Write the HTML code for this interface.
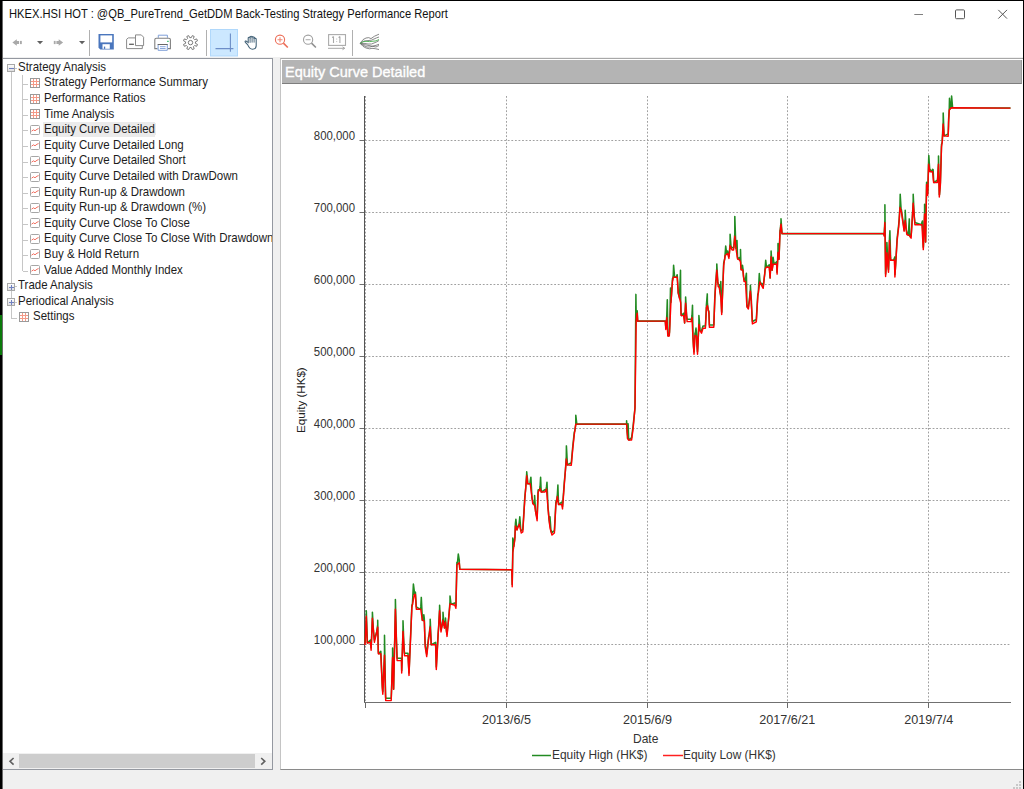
<!DOCTYPE html>
<html><head><meta charset="utf-8">
<style>
*{margin:0;padding:0;box-sizing:border-box}
html,body{width:1024px;height:789px;overflow:hidden;background:#f0f0f0;font-family:"Liberation Sans",sans-serif;}
.abs{position:absolute}
#win{position:absolute;left:0;top:0;width:1024px;height:789px;}
#frameL{position:absolute;left:0;top:0;width:2px;height:789px;background:#000}
#frameL2{position:absolute;left:2px;top:0;width:1px;height:789px;background:#6a6a6a}
#frameT{position:absolute;left:0;top:0;width:1024px;height:1px;background:#000}
#frameR{position:absolute;left:1023px;top:0;width:1px;height:789px;background:#000}
#topbar{position:absolute;left:3px;top:1px;width:1020px;height:56px;background:#fff}
#tbline{display:none}
.title{position:absolute;left:8.9px;top:9.0px;font-size:11.9px;line-height:11.9px;color:#111;white-space:nowrap;transform:scaleX(0.9387);transform-origin:0 0}
#tree{position:absolute;left:2px;top:58px;width:271px;height:712px;background:#fff;border:1px solid #9498a0;}
#treeclip{position:absolute;left:3px;top:59px;width:269px;height:694px;overflow:hidden}
#treeclip .t{margin-left:-3px;margin-top:-59px}
.t{position:absolute;font-size:12.1px;line-height:12.1px;color:#1c1c1c;white-space:nowrap;transform:scaleX(0.9488);transform-origin:0 0}
.sel{background:#ebebeb;padding:0 1px 0 0}
#selbg{position:absolute;left:43px;top:122px;width:112px;height:15px;background:#ebebeb}
#panel{position:absolute;left:280px;top:58px;width:743px;height:712px;background:#fff;border-left:1px solid #c4c4c4;border-top:1px solid #a8a8a8;border-bottom:1px solid #8a8a8a}
#hdr{position:absolute;left:282px;top:60px;width:740px;height:24px;background:#b4b4b4;border-bottom:1px solid #7e7e7e;border-right:1px solid #9a9a9a}
.hdrt{position:absolute;left:285.3px;top:64.1px;font-size:15.3px;line-height:15.3px;color:#fff;white-space:nowrap;-webkit-text-stroke:0.35px #fff;transform:scaleX(0.948);transform-origin:0 0}
.yl{position:absolute;left:294.6px;width:60px;text-align:right;font-size:12.1px;line-height:12.1px;color:#333;white-space:nowrap;transform:scaleX(0.942);transform-origin:100% 0}
.xl{position:absolute;top:713.6px;width:120px;text-align:center;font-size:12.6px;line-height:12.6px;color:#333;white-space:nowrap}
.dl{stroke:#c6c6c6;stroke-width:1}
.gd{stroke:#a0a0a0;stroke-width:1;stroke-dasharray:1.8 1.77}
#svg{position:absolute;left:0;top:0}
</style></head><body>
<div id="win">
<div id="topbar"></div>
<div class="title">HKEX.HSI HOT : @QB_PureTrend_GetDDM Back-Testing Strategy Performance Report</div>
<div id="tbline"></div>
<div id="tree"></div>
<div id="selbg"></div>
<div id="treeclip"><div class="t" style="left:17.9px;top:60.85px">Strategy Analysis</div><div class="t" style="left:44.0px;top:76.45px">Strategy Performance Summary</div><div class="t" style="left:44.0px;top:92.05px">Performance Ratios</div><div class="t" style="left:44.0px;top:107.65px">Time Analysis</div><div class="t sel" style="left:44.0px;top:123.25px">Equity Curve Detailed</div><div class="t" style="left:44.0px;top:138.85px">Equity Curve Detailed Long</div><div class="t" style="left:44.0px;top:154.45px">Equity Curve Detailed Short</div><div class="t" style="left:44.0px;top:170.05px">Equity Curve Detailed with DrawDown</div><div class="t" style="left:44.0px;top:185.65px">Equity Run-up &amp; Drawdown</div><div class="t" style="left:44.0px;top:201.25px">Equity Run-up &amp; Drawdown (%)</div><div class="t" style="left:44.0px;top:216.85px">Equity Curve Close To Close</div><div class="t" style="left:44.0px;top:232.45px">Equity Curve Close To Close With Drawdown</div><div class="t" style="left:44.0px;top:248.05px">Buy &amp; Hold Return</div><div class="t" style="left:44.0px;top:263.65px">Value Added Monthly Index</div><div class="t" style="left:17.9px;top:279.25px">Trade Analysis</div><div class="t" style="left:17.9px;top:294.85px">Periodical Analysis</div><div class="t" style="left:32.8px;top:310.45px">Settings</div></div>
<div id="panel"></div>
<div id="hdr"></div>
<div class="hdrt">Equity Curve Detailed</div>
<div class="yl" style="top:634.1px">100,000</div><div class="yl" style="top:562.1px">200,000</div><div class="yl" style="top:490.1px">300,000</div><div class="yl" style="top:418.1px">400,000</div><div class="yl" style="top:346.1px">500,000</div><div class="yl" style="top:274.1px">600,000</div><div class="yl" style="top:202.1px">700,000</div><div class="yl" style="top:130.1px">800,000</div>
<div class="xl" style="left:446.4px">2013/6/5</div><div class="xl" style="left:587.4px">2015/6/9</div><div class="xl" style="left:727.3px">2017/6/21</div><div class="xl" style="left:868.7px">2019/7/4</div>
<div class="abs" style="left:632.8px;top:732.5px;font-size:12.4px;line-height:12.4px;color:#333;transform:scaleX(0.97);transform-origin:0 0">Date</div>
<div class="abs" style="left:552.4px;top:749.3px;font-size:12.4px;line-height:12.4px;color:#333;white-space:nowrap;transform:scaleX(0.962);transform-origin:0 0">Equity High (HK$)</div>
<div class="abs" style="left:683.2px;top:749.3px;font-size:12.4px;line-height:12.4px;color:#333;white-space:nowrap;transform:scaleX(0.962);transform-origin:0 0">Equity Low (HK$)</div>
<div class="abs" style="left:295px;top:432.5px;transform-origin:0 0;transform:rotate(-90deg);font-size:11.6px;line-height:11.6px;color:#222;white-space:nowrap">Equity (HK$)</div>
<svg id="svg" width="1024" height="789">
<defs><linearGradient id="bg" x1="0" y1="0" x2="0" y2="1"><stop offset="0" stop-color="#ffffff"/><stop offset="1" stop-color="#dcdcdc"/></linearGradient></defs>

<g fill="#a9a9a9">
  <path d="M12.4 42.5 L16.8 39.3 L16.8 40.9 L19.1 40.9 L19.1 44.1 L16.8 44.1 L16.8 45.7 Z"/>
  <rect x="20" y="40.9" width="1.8" height="3.2"/>
  <path d="M63.1 42.5 L58.7 39.3 L58.7 40.9 L56.4 40.9 L56.4 44.1 L58.7 44.1 L58.7 45.7 Z"/>
  <rect x="53.8" y="40.9" width="1.8" height="3.2"/>
</g>
<path d="M37 41 L43.1 41 L40.05 44.2 Z" fill="#606060"/>
<path d="M79 41 L85.1 41 L82.05 44.2 Z" fill="#606060"/>
<rect x="89" y="30" width="1" height="26" fill="#b0b0b0"/>
<rect x="206" y="30" width="1" height="26" fill="#b0b0b0"/>
<rect x="352" y="30" width="1" height="26" fill="#b0b0b0"/>
<!-- save -->
<path d="M98.5 34 H113.8 V49.6 H100.3 L98.5 47.8 Z" fill="#4a76bd"/>
<rect x="100.4" y="35.4" width="11.8" height="7" fill="#fff"/>
<rect x="102.5" y="44.2" width="7.3" height="4.6" fill="#fff"/>
<rect x="103.9" y="46.6" width="1.3" height="2.3" fill="#4a76bd"/>
<!-- page setup -->
<g fill="none" stroke="#8a8a8a" stroke-width="1">
  <path d="M126.6 48.6 V39.3 L128.3 37.9 H135.3"/>
  <path d="M135.5 45.6 V34.9 H141.3 L143.6 37.2 V45.6 Z" fill="#fff"/>
  <path d="M126.6 48.6 H142.3 V45.8"/>
</g>
<rect x="129.1" y="43.7" width="4.8" height="1.1" fill="#444"/>
<!-- printer -->
<path d="M158.3 37.8 V35.2 H167.4 V37.8" fill="none" stroke="#7f9fd8" stroke-width="1"/>
<path d="M157.5 48.6 H154.8 V39.8 Q154.8 38.3 156.3 38.3 H168.9 Q170.4 38.3 170.4 39.8 V48.6 H167.7" fill="none" stroke="#808080" stroke-width="1.1"/>
<rect x="167" y="40.8" width="1.8" height="1.1" fill="#3cc070"/>
<rect x="157.6" y="44" width="10.2" height="1" fill="#666"/>
<path d="M158.1 45 V50.3 H167.3 V45" fill="#fff" stroke="#7f9fd8" stroke-width="1"/>
<path d="M160 46.7 H165.6 M160 48.5 H165.6" stroke="#7f9fd8" stroke-width="0.9"/>
<!-- gear -->
<path d="M192.29 35.63 L194.17 36.40 L193.44 38.55 L194.55 39.66 L196.70 38.93 L197.47 40.81 L195.44 41.82 L195.44 43.38 L197.47 44.39 L196.70 46.27 L194.55 45.54 L193.44 46.65 L194.17 48.80 L192.29 49.57 L191.28 47.54 L189.72 47.54 L188.71 49.57 L186.83 48.80 L187.56 46.65 L186.45 45.54 L184.30 46.27 L183.53 44.39 L185.56 43.38 L185.56 41.82 L183.53 40.81 L184.30 38.93 L186.45 39.66 L187.56 38.55 L186.83 36.40 L188.71 35.63 L189.72 37.66 L191.28 37.66Z" fill="none" stroke="#7a7a7a" stroke-width="1"/>
<circle cx="190.5" cy="42.6" r="2.2" fill="none" stroke="#7a7a7a" stroke-width="1"/>
<!-- selected crosshair button -->
<rect x="210.5" y="29.5" width="27" height="26.5" fill="#cce8ff" stroke="#b0d8fb" stroke-width="1"/>
<path d="M230.4 33.6 V51.8 M215.5 48.6 H233.4" stroke="#6d8ec8" stroke-width="1.1"/>
<!-- hand -->
<path d="M247.6 44.6 L245.4 42.4 Q244.6 41.2 245.8 40.9 L248.2 42.6 V37.9 Q249.1 36.7 250.1 37.6 V36.6 Q251.1 35.8 252.1 36.6 V37 Q253.1 36.3 254.1 37.2 V38.3 Q255.2 37.8 256.2 38.8 V45.5 Q256.2 49.2 252.4 49.2 Q249.6 49.2 247.6 44.6 Z" fill="#fff" stroke="#3f5f75" stroke-width="1.05"/>
<path d="M250.1 37.6 V42.8 M252.1 36.9 V42.6 M254.1 37.4 V42.6" stroke="#3f5f75" stroke-width="0.9"/>
<!-- zoom in -->
<circle cx="280" cy="39.7" r="4.6" fill="none" stroke="#ec6e58" stroke-width="1.1"/>
<path d="M283.4 43.1 L287.8 47.5" stroke="#ec6e58" stroke-width="1.6"/>
<path d="M277.5 39.7 H282.5 M280 37.2 V42.2" stroke="#f08a78" stroke-width="1.1"/>
<!-- zoom out -->
<circle cx="308.1" cy="39.7" r="4.6" fill="none" stroke="#a0a0a0" stroke-width="1.1"/>
<path d="M311.5 43.1 L315.9 47.5" stroke="#909090" stroke-width="1.6"/>
<path d="M305.6 39.7 H310.6" stroke="#b0b0b0" stroke-width="1.1"/>
<!-- 1:1 -->
<rect x="328.6" y="34.6" width="16.9" height="10.8" fill="none" stroke="#ababab" stroke-width="1.1"/>
<path d="M333.5 36.4 V43 M332.2 37.6 L333.5 36.4 M339.9 36.4 V43 M338.6 37.6 L339.9 36.4" fill="none" stroke="#a8a8a8" stroke-width="1.1"/>
<path d="M336.7 38.6 V39.5 M336.7 41.2 V42.1" stroke="#b4b4b4" stroke-width="1"/>
<path d="M328 48.3 H344.6 M342.5 46.9 L344.8 48.3 L342.5 49.7" fill="none" stroke="#a8a8a8" stroke-width="1"/>
<!-- chart tool icon -->
<g fill="none" stroke="#6a6a6a" stroke-width="0.8">
  <path d="M360.2 43.4 Q363 38.5 366 38 Q369 37 371 38.6 Q374 36 379 34.2"/>
  <path d="M360.2 43.4 Q364 40 368 40.6 Q372 40.5 374 39 Q376 38 379 37"/>
  <path d="M360.2 43.4 Q364 43 368 44 Q372 44.5 374 43 Q377 42 379 40.5"/>
  <path d="M360.2 43.4 Q364 46 367 47 Q370 47.5 373 46 Q376 45.5 379 44.3"/>
  <path d="M360.2 43.4 Q363 47 366 48 Q370 49.5 372 48.3 Q375 48.5 379 49.5"/>
  <path d="M360.2 43.4 Q365 45 369 45.5 Q373 46.5 376 47 Q378 46 379 45.5"/>
</g>
<path d="M360.2 43.4 Q363 41 366 41.3 Q370 42 373 41.2 Q376 41.4 379 39.5" fill="none" stroke="#4caf50" stroke-width="0.9"/>
<!-- window controls -->
<path d="M914.3 14.5 H923" stroke="#808080" stroke-width="1"/>
<rect x="955.5" y="9.9" width="9" height="8.8" rx="1" fill="none" stroke="#555" stroke-width="1"/>
<path d="M998.3 9.9 L1007 18.6 M1007 9.9 L998.3 18.6" stroke="#555" stroke-width="1"/>


<rect x="3" y="753" width="269" height="16" fill="#f0f0f0"/>
<rect x="19" y="754" width="236" height="14" fill="#cdcdcd"/>
<path d="M13.6 758 L10 761.3 L13.6 764.6" fill="none" stroke="#606060" stroke-width="1.6"/>
<path d="M261.2 758 L264.8 761.3 L261.2 764.6" fill="none" stroke="#606060" stroke-width="1.6"/>
<g fill="#c8c8c8"><rect x="1019" y="781" width="2" height="2"/><rect x="1016" y="784" width="2" height="2"/><rect x="1019" y="784" width="2" height="2"/><rect x="1013" y="787" width="2" height="2"/><rect x="1016" y="787" width="2" height="2"/><rect x="1019" y="787" width="2" height="2"/></g>

<line x1="11.5" y1="72" x2="11.5" y2="318" class="dl"/><line x1="22.5" y1="75" x2="22.5" y2="271" class="dl"/>
<line x1="15" y1="68.5" x2="17" y2="68.5" class="dl"/><rect x="7.5" y="64.5" width="7" height="7" fill="url(#bg)" stroke="#a8a8a8"/><rect x="9" y="68" width="5" height="1" fill="#7080c0"/><line x1="23" y1="84.5" x2="28" y2="84.5" class="dl"/><line x1="23" y1="99.5" x2="28" y2="99.5" class="dl"/><line x1="23" y1="115.5" x2="28" y2="115.5" class="dl"/><line x1="23" y1="130.5" x2="28" y2="130.5" class="dl"/><line x1="23" y1="146.5" x2="28" y2="146.5" class="dl"/><line x1="23" y1="162.5" x2="28" y2="162.5" class="dl"/><line x1="23" y1="177.5" x2="28" y2="177.5" class="dl"/><line x1="23" y1="193.5" x2="28" y2="193.5" class="dl"/><line x1="23" y1="208.5" x2="28" y2="208.5" class="dl"/><line x1="23" y1="224.5" x2="28" y2="224.5" class="dl"/><line x1="23" y1="240.5" x2="28" y2="240.5" class="dl"/><line x1="23" y1="255.5" x2="28" y2="255.5" class="dl"/><line x1="23" y1="271.5" x2="28" y2="271.5" class="dl"/><line x1="15" y1="286.5" x2="17" y2="286.5" class="dl"/><rect x="7.5" y="283.5" width="7" height="7" fill="url(#bg)" stroke="#a8a8a8"/><rect x="9" y="287" width="5" height="1" fill="#7080c0"/><rect x="11" y="285" width="1" height="5" fill="#7080c0"/><line x1="15" y1="302.5" x2="17" y2="302.5" class="dl"/><rect x="7.5" y="298.5" width="7" height="7" fill="url(#bg)" stroke="#a8a8a8"/><rect x="9" y="302" width="5" height="1" fill="#7080c0"/><rect x="11" y="300" width="1" height="5" fill="#7080c0"/><line x1="11" y1="318.5" x2="17" y2="318.5" class="dl"/>
<g transform="translate(30,78)"><rect x="0.5" y="0.5" width="9" height="9" fill="#fff" stroke="#9a9a9a"/><path d="M1 3.5H9M1 6.5H9M3.5 1V9M6.5 1V9" stroke="#f49a88" stroke-width="1"/></g><g transform="translate(30,94)"><rect x="0.5" y="0.5" width="9" height="9" fill="#fff" stroke="#9a9a9a"/><path d="M1 3.5H9M1 6.5H9M3.5 1V9M6.5 1V9" stroke="#f49a88" stroke-width="1"/></g><g transform="translate(30,109)"><rect x="0.5" y="0.5" width="9" height="9" fill="#fff" stroke="#9a9a9a"/><path d="M1 3.5H9M1 6.5H9M3.5 1V9M6.5 1V9" stroke="#f49a88" stroke-width="1"/></g><g transform="translate(30,125)"><rect x="0.5" y="0.5" width="9" height="9" rx="1" fill="#fff" stroke="#a6a6a6"/><path d="M1.5 6.2L3.5 4.8L5 5.8L7 4.2L8.6 3.6" fill="none" stroke="#f06050" stroke-width="0.9"/></g><g transform="translate(30,140)"><rect x="0.5" y="0.5" width="9" height="9" rx="1" fill="#fff" stroke="#a6a6a6"/><path d="M1.5 6.2L3.5 4.8L5 5.8L7 4.2L8.6 3.6" fill="none" stroke="#f06050" stroke-width="0.9"/></g><g transform="translate(30,156)"><rect x="0.5" y="0.5" width="9" height="9" rx="1" fill="#fff" stroke="#a6a6a6"/><path d="M1.5 6.2L3.5 4.8L5 5.8L7 4.2L8.6 3.6" fill="none" stroke="#f06050" stroke-width="0.9"/></g><g transform="translate(30,172)"><rect x="0.5" y="0.5" width="9" height="9" rx="1" fill="#fff" stroke="#a6a6a6"/><path d="M1.5 6.2L3.5 4.8L5 5.8L7 4.2L8.6 3.6" fill="none" stroke="#f06050" stroke-width="0.9"/></g><g transform="translate(30,187)"><rect x="0.5" y="0.5" width="9" height="9" rx="1" fill="#fff" stroke="#a6a6a6"/><path d="M1.5 6.2L3.5 4.8L5 5.8L7 4.2L8.6 3.6" fill="none" stroke="#f06050" stroke-width="0.9"/></g><g transform="translate(30,203)"><rect x="0.5" y="0.5" width="9" height="9" rx="1" fill="#fff" stroke="#a6a6a6"/><path d="M1.5 6.2L3.5 4.8L5 5.8L7 4.2L8.6 3.6" fill="none" stroke="#f06050" stroke-width="0.9"/></g><g transform="translate(30,218)"><rect x="0.5" y="0.5" width="9" height="9" rx="1" fill="#fff" stroke="#a6a6a6"/><path d="M1.5 6.2L3.5 4.8L5 5.8L7 4.2L8.6 3.6" fill="none" stroke="#f06050" stroke-width="0.9"/></g><g transform="translate(30,234)"><rect x="0.5" y="0.5" width="9" height="9" rx="1" fill="#fff" stroke="#a6a6a6"/><path d="M1.5 6.2L3.5 4.8L5 5.8L7 4.2L8.6 3.6" fill="none" stroke="#f06050" stroke-width="0.9"/></g><g transform="translate(30,249)"><rect x="0.5" y="0.5" width="9" height="9" rx="1" fill="#fff" stroke="#a6a6a6"/><path d="M1.5 6.2L3.5 4.8L5 5.8L7 4.2L8.6 3.6" fill="none" stroke="#f06050" stroke-width="0.9"/></g><g transform="translate(30,265)"><rect x="0.5" y="0.5" width="9" height="9" rx="1" fill="#fff" stroke="#a6a6a6"/><path d="M1.5 6.2L3.5 4.8L5 5.8L7 4.2L8.6 3.6" fill="none" stroke="#f06050" stroke-width="0.9"/></g><g transform="translate(19,312)"><rect x="0.5" y="0.5" width="9" height="9" fill="#fff" stroke="#9a9a9a"/><path d="M1 3.5H9M1 6.5H9M3.5 1V9M6.5 1V9" stroke="#f49a88" stroke-width="1"/></g>
<line x1="365" y1="644.5" x2="1010" y2="644.5" class="gd"/><line x1="359.5" y1="644.5" x2="364" y2="644.5" stroke="#707070"/><line x1="365" y1="572.5" x2="1010" y2="572.5" class="gd"/><line x1="359.5" y1="572.5" x2="364" y2="572.5" stroke="#707070"/><line x1="365" y1="500.5" x2="1010" y2="500.5" class="gd"/><line x1="359.5" y1="500.5" x2="364" y2="500.5" stroke="#707070"/><line x1="365" y1="428.5" x2="1010" y2="428.5" class="gd"/><line x1="359.5" y1="428.5" x2="364" y2="428.5" stroke="#707070"/><line x1="365" y1="356.5" x2="1010" y2="356.5" class="gd"/><line x1="359.5" y1="356.5" x2="364" y2="356.5" stroke="#707070"/><line x1="365" y1="284.5" x2="1010" y2="284.5" class="gd"/><line x1="359.5" y1="284.5" x2="364" y2="284.5" stroke="#707070"/><line x1="365" y1="212.5" x2="1010" y2="212.5" class="gd"/><line x1="359.5" y1="212.5" x2="364" y2="212.5" stroke="#707070"/><line x1="365" y1="140.5" x2="1010" y2="140.5" class="gd"/><line x1="359.5" y1="140.5" x2="364" y2="140.5" stroke="#707070"/><line x1="365.5" y1="96" x2="365.5" y2="702" class="gd"/><line x1="365.5" y1="702" x2="365.5" y2="708" stroke="#6a6a6a"/><line x1="506.5" y1="96" x2="506.5" y2="702" class="gd"/><line x1="506.5" y1="702" x2="506.5" y2="708" stroke="#6a6a6a"/><line x1="647.5" y1="96" x2="647.5" y2="702" class="gd"/><line x1="647.5" y1="702" x2="647.5" y2="708" stroke="#6a6a6a"/><line x1="787.5" y1="96" x2="787.5" y2="702" class="gd"/><line x1="787.5" y1="702" x2="787.5" y2="708" stroke="#6a6a6a"/><line x1="928.5" y1="96" x2="928.5" y2="702" class="gd"/><line x1="928.5" y1="702" x2="928.5" y2="708" stroke="#6a6a6a"/>
<line x1="364.5" y1="96" x2="364.5" y2="703" stroke="#555"/>
<line x1="364" y1="702.5" x2="1011" y2="702.5" stroke="#707070"/>
<path d="M365.0 642.6 L365.3 638.4 L366.3 613.8 L366.3 610.8 L367.3 640.6 L367.3 643.0 L370.5 640.1 L371.1 647.8 L371.4 642.8 L372.4 615.8 L372.4 612.3 L373.4 630.2 L374.4 639.9 L376.7 631.7 L377.7 624.7 L377.7 620.2 L378.3 651.3 L378.7 653.7 L380.8 651.3 L382.3 685.9 L382.8 691.8 L383.5 678.1 L384.5 652.8 L384.5 635.3 L385.5 693.0 L385.7 698.2 L391.2 698.2 L391.6 688.3 L392.6 655.2 L392.6 648.0 L393.6 686.9 L393.6 689.3 L394.4 653.7 L395.4 606.9 L395.4 599.4 L396.4 639.5 L397.1 658.2 L401.5 658.2 L401.7 670.6 L402.0 663.4 L403.0 629.0 L403.0 620.7 L404.0 647.6 L404.5 653.3 L408.0 653.3 L409.0 673.0 L411.9 604.9 L412.4 604.7 L413.4 584.1 L414.4 592.1 L414.4 594.5 L415.4 592.1 L416.3 606.9 L420.3 609.3 L420.8 606.9 L421.3 597.4 L422.3 617.8 L422.3 620.2 L422.8 620.4 L423.8 614.7 L424.3 618.7 L424.8 635.4 L425.2 644.4 L426.7 654.2 L428.5 637.6 L429.2 634.6 L430.2 624.6 L430.2 619.2 L431.2 642.4 L431.2 644.8 L435.6 642.4 L436.3 667.1 L438.1 633.5 L438.6 627.5 L439.6 608.4 L439.6 605.3 L440.6 625.9 L441.0 629.6 L442.0 626.1 L443.0 617.8 L443.0 612.3 L444.0 625.4 L444.5 625.6 L444.5 628.0 L445.5 619.6 L445.5 618.0 L446.5 631.6 L447.0 634.0 L449.0 614.7 L450.0 601.5 L450.0 596.0 L451.0 604.2 L454.9 602.9 L455.9 605.9 L456.9 562.4 L457.3 564.5 L458.3 554.0 L459.3 560.4 L459.3 562.8 L459.8 569.3 L511.8 569.7 L511.8 569.7 L512.2 584.4 L512.8 550.3 L512.8 537.9 L513.8 546.3 L514.8 537.5 L514.9 537.6 L515.4 523.7 L515.9 519.2 L516.9 529.8 L517.0 527.6 L518.8 525.5 L519.3 521.8 L519.8 516.8 L520.8 530.8 L521.3 530.6 L522.8 529.6 L524.8 497.1 L525.7 488.3 L526.7 473.4 L526.7 471.8 L527.7 481.3 L527.7 483.7 L529.9 483.7 L530.2 481.3 L530.9 477.2 L531.9 497.1 L532.7 501.0 L533.6 504.3 L534.6 503.0 L534.6 495.5 L535.6 511.5 L537.1 518.3 L538.1 490.1 L539.6 489.6 L540.1 486.2 L540.6 477.2 L541.1 489.6 L541.6 492.0 L545.0 489.6 L546.0 490.1 L546.5 486.7 L547.0 482.2 L548.0 508.0 L548.5 511.9 L549.0 518.9 L550.0 525.7 L550.0 516.8 L551.0 531.6 L551.4 530.6 L552.0 532.6 L554.4 530.6 L555.9 502.0 L556.9 499.1 L557.4 494.1 L557.9 485.1 L558.4 502.0 L558.9 504.4 L561.8 502.0 L562.5 506.5 L564.3 482.2 L565.4 470.5 L566.3 456.6 L566.4 445.9 L567.3 462.5 L567.4 464.9 L571.3 462.8 L572.8 446.0 L574.3 432.1 L574.8 431.0 L575.8 424.1 L575.8 415.3 L576.8 424.1 L625.6 424.1 L626.6 424.1 L626.6 420.7 L627.1 431.3 L627.6 436.1 L627.6 438.5 L628.1 423.7 L628.6 437.6 L629.1 440.0 L631.6 437.6 L633.1 426.2 L634.9 408.9 L635.0 405.4 L635.9 294.4 L636.2 318.2 L636.9 315.4 L637.2 310.8 L637.7 321.1 L665.3 321.1 L665.8 327.1 L666.3 323.6 L666.8 315.2 L667.3 299.8 L667.8 333.5 L668.3 335.9 L669.3 333.5 L669.5 332.1 L669.8 324.1 L670.5 288.0 L670.8 302.4 L671.5 295.0 L672.5 278.6 L672.6 280.5 L673.3 274.8 L673.6 265.3 L674.6 277.2 L676.2 277.2 L677.2 274.8 L677.2 274.7 L678.2 290.5 L678.2 292.9 L679.5 298.0 L680.5 270.3 L680.7 300.4 L681.1 313.2 L681.5 315.6 L683.6 313.2 L684.6 320.6 L684.6 323.0 L685.6 300.9 L685.6 296.9 L686.6 315.5 L687.1 319.2 L691.0 319.2 L691.5 319.6 L692.0 315.2 L692.5 305.3 L693.0 336.5 L693.5 346.5 L694.0 351.8 L695.0 333.0 L695.0 335.4 L696.0 328.0 L696.5 334.0 L697.0 345.3 L697.5 351.8 L697.9 345.7 L698.9 322.1 L698.9 315.6 L699.9 328.1 L699.9 330.5 L701.5 330.8 L703.0 325.9 L705.4 325.9 L706.3 309.6 L706.4 305.1 L707.3 293.9 L707.4 303.2 L708.3 310.3 L708.9 311.1 L709.4 324.9 L713.8 324.9 L714.8 297.2 L715.8 280.4 L715.8 282.8 L716.8 267.9 L716.8 263.9 L717.8 281.9 L718.2 284.2 L719.3 284.9 L719.8 290.8 L720.8 295.3 L720.8 281.4 L721.7 312.1 L721.8 312.1 L723.2 275.5 L723.7 262.9 L724.7 258.8 L725.2 253.1 L725.7 246.1 L726.7 254.2 L727.6 251.1 L728.9 256.0 L729.1 256.3 L730.1 243.2 L730.1 234.2 L731.1 247.8 L732.1 247.6 L733.6 247.6 L733.8 247.7 L734.8 233.8 L734.8 216.4 L735.8 246.4 L736.0 246.1 L736.0 248.5 L737.0 240.6 L737.5 256.5 L738.0 259.1 L739.5 257.5 L739.5 259.9 L740.5 259.6 L740.5 249.5 L741.0 267.4 L741.5 269.8 L741.5 269.8 L742.5 267.4 L742.5 265.3 L743.0 269.1 L743.5 276.4 L744.0 279.0 L745.4 281.4 L745.5 279.0 L746.4 273.2 L746.9 304.2 L747.4 307.4 L748.4 306.6 L749.4 300.1 L750.4 288.8 L750.4 285.3 L751.4 301.2 L751.4 303.6 L752.4 321.5 L756.3 319.5 L757.8 294.3 L758.3 293.0 L759.3 273.5 L759.8 279.5 L760.3 282.9 L761.8 283.4 L763.2 285.9 L764.7 274.0 L765.2 266.8 L765.7 260.3 L766.2 264.8 L766.7 267.2 L769.2 264.8 L770.1 275.6 L770.1 278.0 L771.1 254.4 L771.1 250.9 L772.1 267.8 L772.1 270.2 L772.1 270.2 L773.1 261.8 L773.1 257.3 L774.1 264.2 L776.6 261.8 L777.0 272.1 L777.1 271.7 L778.0 250.0 L778.0 243.5 L779.0 256.9 L779.0 259.3 L780.0 230.2 L780.0 232.6 L781.0 221.8 L781.0 218.8 L782.0 233.6 L782.0 233.6 L883.6 233.6 L883.9 234.8 L884.2 233.7 L884.9 220.2 L884.9 204.8 L885.6 274.1 L885.9 271.0 L885.9 271.0 L886.9 250.4 L886.9 242.6 L887.9 263.3 L887.9 265.7 L888.5 269.8 L888.9 259.5 L889.5 238.0 L889.9 230.7 L890.6 257.9 L890.9 260.3 L893.6 260.3 L894.4 257.9 L894.6 257.1 L894.9 274.6 L895.6 265.5 L897.1 238.5 L898.7 224.5 L899.2 219.4 L900.0 205.1 L900.2 194.3 L901.2 211.3 L901.4 209.5 L902.5 217.5 L904.1 228.8 L904.2 230.2 L905.2 218.1 L905.2 210.2 L906.2 229.3 L906.8 232.1 L908.3 235.1 L909.3 218.9 L909.5 233.2 L910.3 236.9 L911.1 235.8 L912.2 219.9 L913.2 200.8 L913.2 194.3 L914.2 215.9 L914.9 222.4 L921.4 224.8 L921.9 222.4 L922.4 221.0 L923.3 247.2 L923.4 246.9 L923.6 241.4 L924.6 211.6 L924.6 204.3 L925.6 239.6 L925.6 242.0 L926.6 182.2 L927.7 193.0 L927.8 191.9 L928.6 161.8 L928.8 155.6 L929.8 171.1 L929.9 169.3 L932.1 171.7 L932.6 169.3 L933.1 169.6 L933.6 180.1 L934.1 182.5 L937.4 180.1 L937.5 180.8 L938.5 161.8 L938.5 156.1 L939.3 194.6 L939.5 194.7 L940.4 182.2 L941.5 144.5 L942.2 142.2 L942.3 139.1 L943.2 121.7 L943.2 113.1 L944.0 133.5 L944.2 135.9 L948.2 133.9 L948.5 125.7 L948.6 119.8 L949.3 107.6 L949.5 98.3 L950.5 108.6 L950.6 108.5 L951.2 107.8 L951.6 96.0 L952.6 107.8 L1010.5 108.1" fill="none" stroke="#228b22" stroke-width="1.55" stroke-linejoin="round"/>
<path d="M365.0 645.0 L366.3 616.2 L367.3 643.0 L370.5 642.5 L371.1 650.2 L372.4 618.2 L374.4 642.3 L377.7 627.1 L378.3 653.7 L380.8 653.7 L382.3 688.3 L382.8 694.2 L384.5 655.2 L385.7 700.6 L391.2 700.6 L392.6 657.6 L393.6 689.3 L395.4 609.3 L397.1 660.6 L401.5 660.6 L401.7 673.0 L403.0 631.4 L404.5 655.7 L408.0 655.7 L409.0 675.4 L411.9 607.3 L414.4 594.5 L415.4 594.5 L416.3 609.3 L420.8 609.3 L422.3 620.2 L424.3 621.1 L425.2 646.8 L426.7 656.6 L428.5 640.0 L430.2 627.0 L431.2 644.8 L435.6 644.8 L436.3 669.5 L438.1 635.9 L439.6 610.8 L441.0 632.0 L443.0 620.2 L444.5 628.0 L445.5 622.0 L447.0 636.4 L450.0 603.9 L454.9 605.3 L455.9 608.3 L456.9 564.8 L459.3 562.8 L459.8 569.3 L511.8 569.7 L512.2 586.8 L512.8 552.7 L514.8 539.9 L515.4 526.1 L517.0 530.0 L519.3 524.2 L521.3 533.0 L522.8 532.0 L524.8 499.5 L526.7 475.8 L527.7 483.7 L530.2 483.7 L532.7 503.4 L534.6 505.4 L537.1 520.7 L538.1 492.5 L540.1 488.6 L541.1 492.0 L545.0 492.0 L546.5 489.1 L548.5 514.3 L550.0 528.1 L551.4 533.0 L552.0 535.0 L554.4 533.0 L555.9 504.4 L557.4 496.5 L558.4 504.4 L561.8 504.4 L562.5 508.9 L564.3 484.6 L566.3 459.0 L567.3 464.9 L571.3 465.2 L572.8 448.4 L574.3 434.5 L575.8 424.1 L626.6 424.1 L627.6 438.5 L628.6 440.0 L631.6 440.0 L633.1 428.6 L635.0 407.8 L636.2 320.6 L637.2 313.2 L637.7 321.1 L665.3 321.1 L665.8 329.5 L666.8 317.6 L667.8 335.9 L669.3 335.9 L669.8 326.5 L670.8 304.8 L672.5 281.0 L673.3 277.2 L677.2 277.2 L678.2 292.9 L680.7 302.8 L681.1 315.6 L683.6 315.6 L684.6 323.0 L685.6 303.3 L687.1 321.6 L691.0 321.6 L692.0 317.6 L693.0 338.9 L694.0 354.2 L695.0 335.4 L696.5 336.4 L697.5 354.2 L698.9 324.5 L699.9 330.5 L701.5 333.2 L703.0 328.3 L705.4 328.3 L706.4 307.5 L707.4 305.6 L708.9 313.5 L709.4 327.3 L713.8 327.3 L714.8 299.6 L715.8 282.8 L716.8 270.3 L718.2 286.6 L719.3 287.3 L720.8 297.7 L721.7 314.5 L723.2 277.9 L723.7 265.3 L725.2 255.5 L727.6 253.5 L728.9 258.4 L730.1 245.6 L732.1 250.0 L733.6 250.0 L734.8 236.2 L736.0 248.5 L737.5 258.9 L739.5 259.9 L740.5 262.0 L741.0 269.8 L742.5 269.8 L743.0 271.5 L744.0 281.4 L745.5 281.4 L746.9 306.6 L748.4 309.0 L750.4 291.2 L751.4 303.6 L752.4 323.9 L756.3 321.9 L757.8 296.7 L759.8 281.9 L761.8 285.8 L763.2 288.3 L765.2 269.2 L766.2 267.2 L769.2 267.2 L770.1 278.0 L771.1 256.8 L772.1 270.2 L773.1 264.2 L776.6 264.2 L777.1 274.1 L778.0 252.4 L779.0 259.3 L780.0 232.6 L781.0 224.2 L782.0 233.6 L883.6 233.6 L884.2 236.1 L884.9 222.6 L885.6 276.5 L886.9 252.8 L887.9 265.7 L888.5 272.2 L889.5 240.4 L890.6 260.3 L894.4 260.3 L894.9 277.0 L897.1 240.9 L898.7 226.9 L900.0 207.5 L901.4 211.9 L902.5 219.9 L904.1 231.2 L905.2 220.5 L906.8 234.5 L909.5 235.6 L911.1 238.2 L913.2 203.2 L914.9 224.8 L921.9 224.8 L923.3 249.6 L924.6 214.0 L925.6 242.0 L926.6 184.6 L927.7 195.4 L928.6 164.2 L929.9 171.7 L932.6 171.7 L933.6 182.5 L937.4 182.5 L938.5 164.2 L939.3 197.0 L940.4 184.6 L941.5 146.9 L942.3 141.5 L943.2 124.1 L944.0 135.9 L948.2 136.3 L948.6 122.2 L949.3 110.0 L951.2 107.8 L1010.5 108.1" fill="none" stroke="#ff0000" stroke-width="1.45" stroke-linejoin="round"/>
<line x1="532" y1="755.5" x2="551" y2="755.5" stroke="#228b22" stroke-width="1.5"/>
<line x1="663" y1="755.5" x2="683" y2="755.5" stroke="#ff2020" stroke-width="1.5"/>
</svg>
<div id="frameL"></div><div style="position:absolute;left:0;top:315px;width:2px;height:40px;background:#0a7a0a"></div><div id="frameL2"></div><div id="frameT"></div><div id="frameR"></div>
</div>
</body></html>
